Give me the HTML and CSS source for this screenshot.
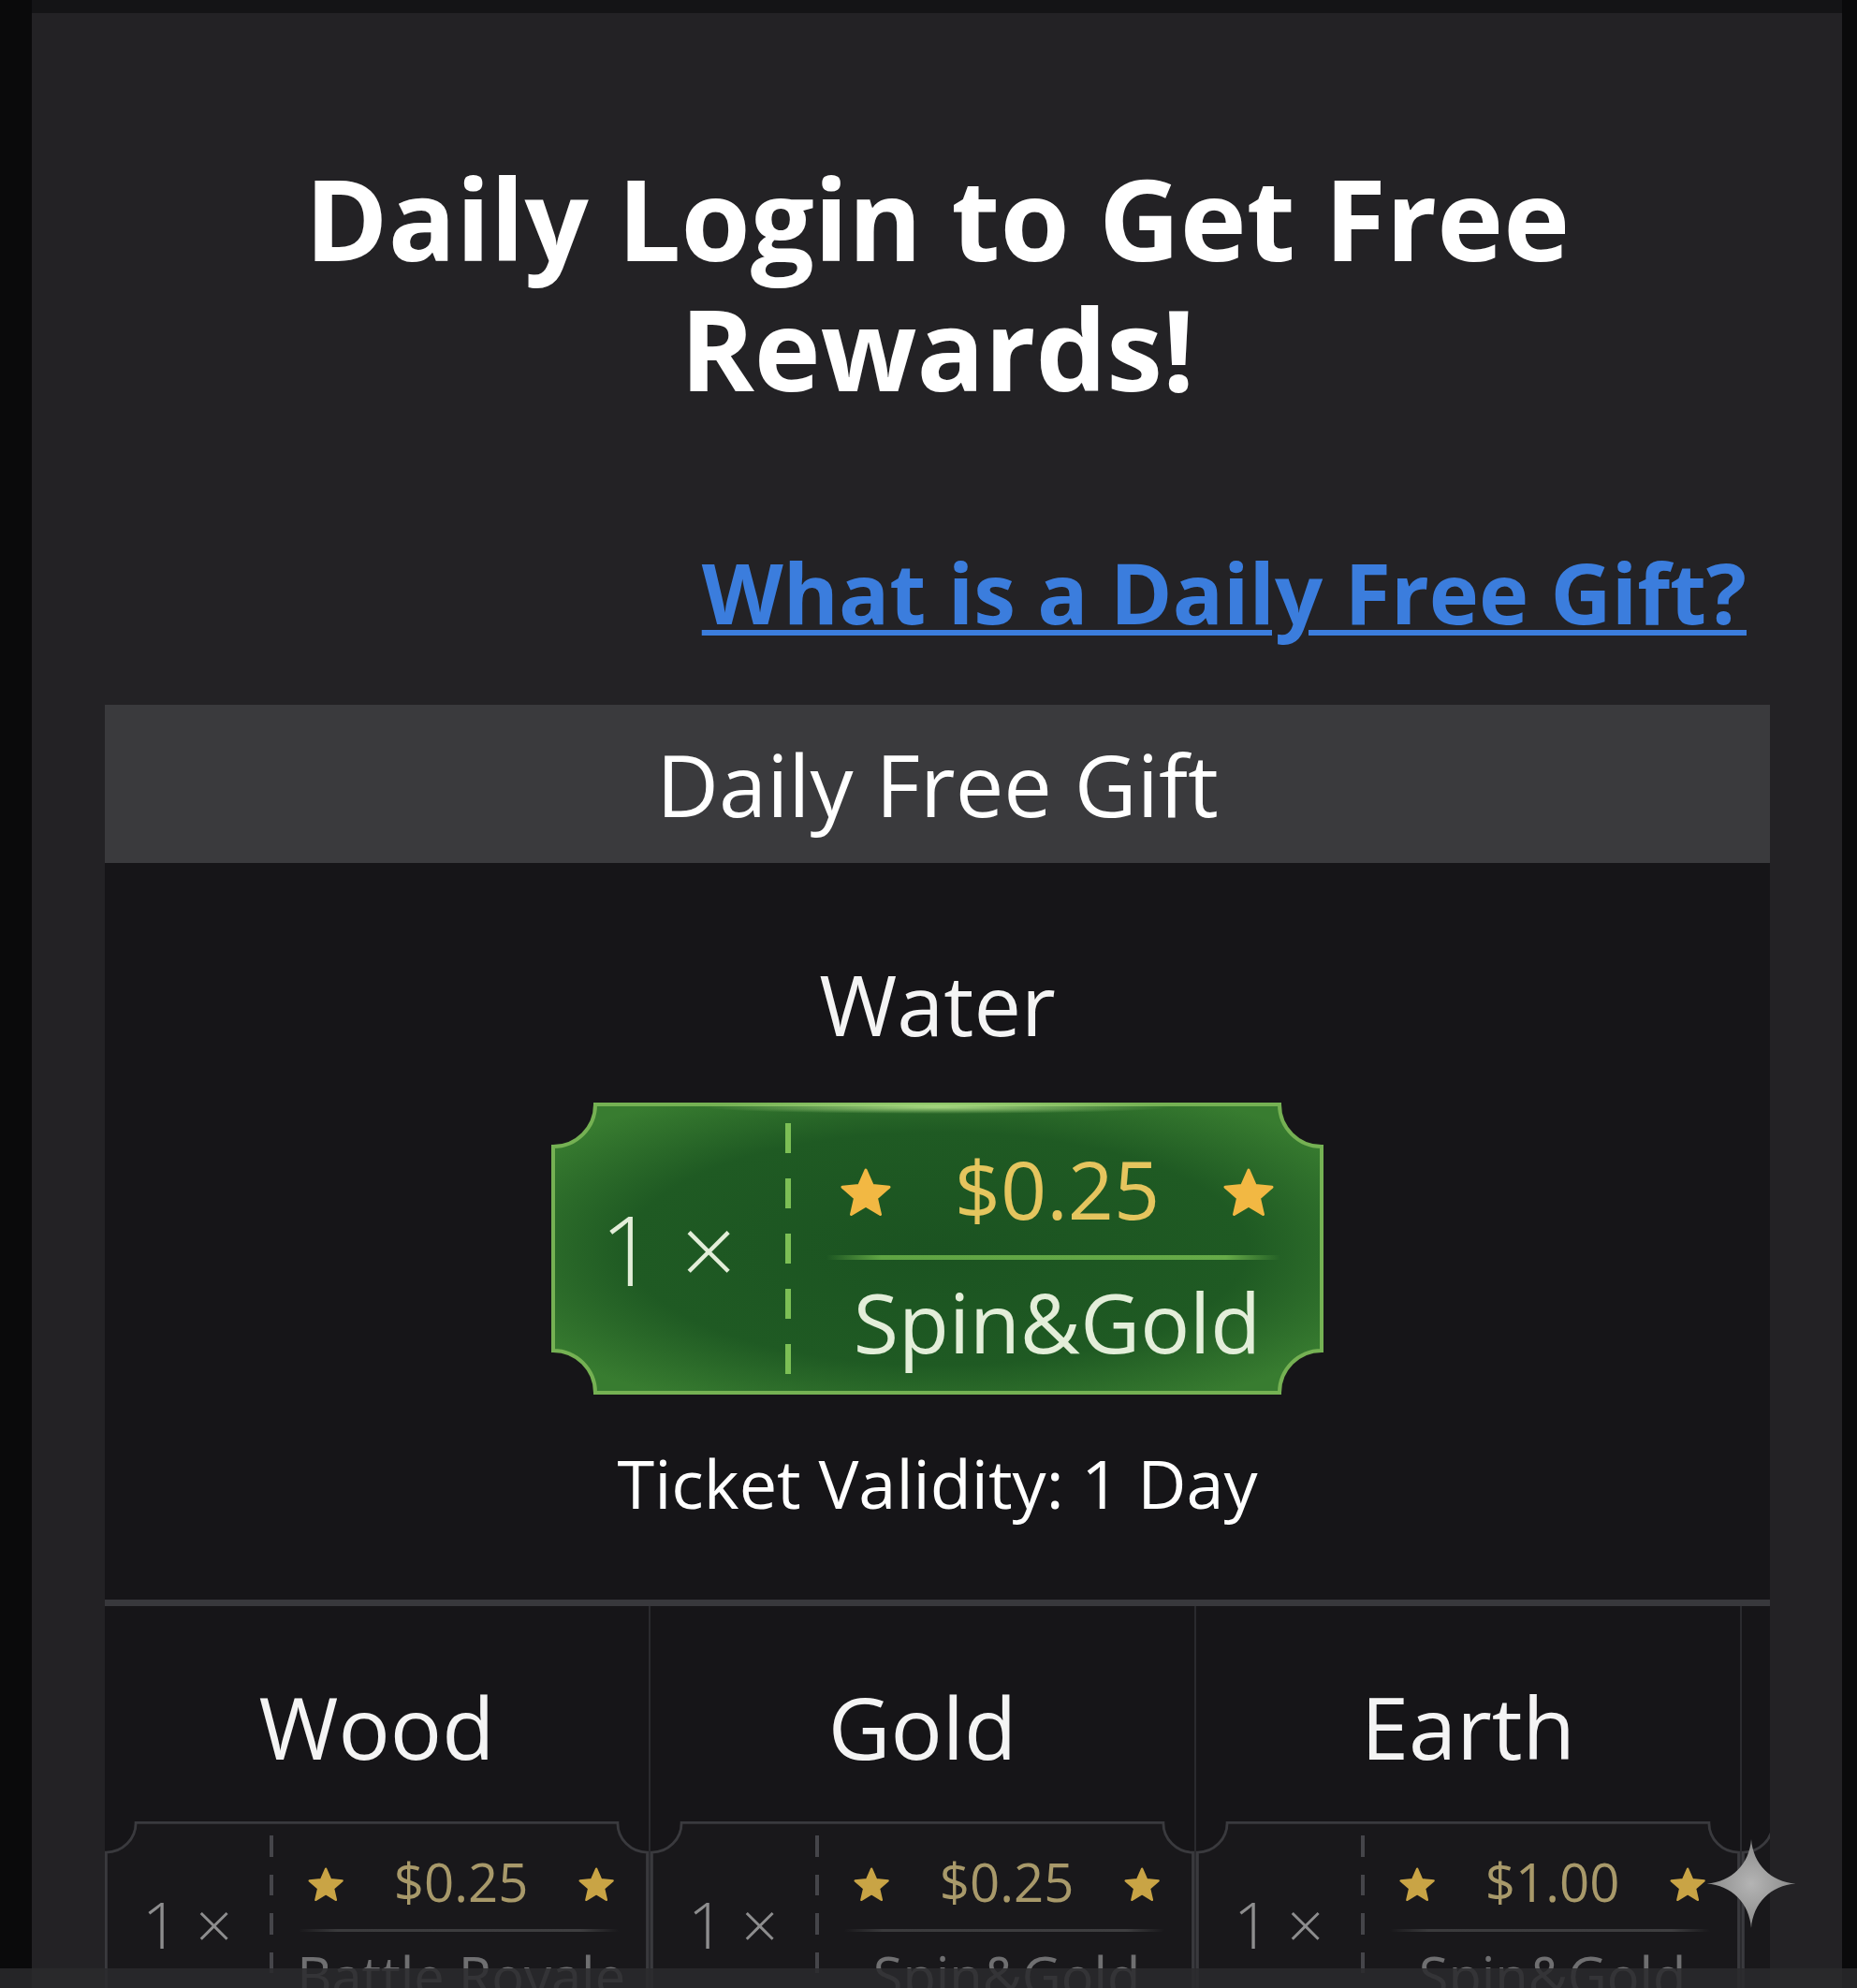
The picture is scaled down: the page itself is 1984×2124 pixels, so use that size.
FILE: index.html
```html
<!DOCTYPE html>
<html lang="en">
<head>
    <meta charset="UTF-8">
    <meta name="viewport" content="width=device-width, initial-scale=1.0">
    <title>Daily Free Gift</title>
    <link rel="stylesheet" href="styles.css">
</head>
<body>
<!-- shared gradients for the ticket shapes -->
<svg class="defs" width="0" height="0">
    <defs>
        <radialGradient id="green-fill" cx="0.5" cy="0.5" r="0.62">
            <stop offset="0" stop-color="#1b5321"/>
            <stop offset="0.65" stop-color="#1f5a23"/>
            <stop offset="1" stop-color="#387c30"/>
        </radialGradient>
        <radialGradient id="top-glow" cx="0.5" cy="0.5" r="0.5">
            <stop offset="0" stop-color="#b6e58c" stop-opacity="0.9"/>
            <stop offset="1" stop-color="#b6e58c" stop-opacity="0"/>
        </radialGradient>
        <radialGradient id="sparkle-fill" cx="0.5" cy="0.5" r="0.5">
            <stop offset="0" stop-color="#b4b4b4"/>
            <stop offset="1" stop-color="#8a8a8a"/>
        </radialGradient>
    </defs>
</svg>

<div class="screen">
    <h1 class="title">Daily Login to Get Free Rewards!</h1>
    <div class="help"><a href="#">What is a Daily Free Gift?</a></div>

    <div class="gift">
        <div class="gift__head">Daily Free Gift</div>

        <div class="gift__today">
            <h2 class="day-name">Water</h2>
            <div class="ticket">
                <svg class="ticket__shape" viewBox="0 0 825 312">
                    <path d="M47,2 H778 A45,45 0 0 0 823,47 V265 A45,45 0 0 0 778,310 H47 A45,45 0 0 0 2,265 V47 A45,45 0 0 0 47,2 Z"/>
                    <ellipse class="glow" cx="412" cy="5" rx="250" ry="7"/>
                </svg>
                <div class="ticket__count">1 ×</div>
                <div class="ticket__cut"></div>
                <div class="ticket__info">
                    <div class="ticket__price">
                        <svg class="star" viewBox="0 0 24 24"><polygon points="12,2 14.9,8.6 22,9.3 16.6,14 18.2,21 12,17.3 5.8,21 7.4,14 2,9.3 9.1,8.6"/></svg>
                        <span>$0.25</span>
                        <svg class="star" viewBox="0 0 24 24"><polygon points="12,2 14.9,8.6 22,9.3 16.6,14 18.2,21 12,17.3 5.8,21 7.4,14 2,9.3 9.1,8.6"/></svg>
                    </div>
                    <div class="ticket__line"></div>
                    <div class="ticket__game">Spin&amp;Gold</div>
                </div>
            </div>
            <p class="validity">Ticket Validity: 1 Day</p>
        </div>

        <div class="days">
            <div class="day">
                <h3 class="day-name">Wood</h3>
                <div class="ticket ticket--small">
                    <svg class="ticket__shape" viewBox="0 0 825 312">
                        <path d="M47,2 H778 A45,45 0 0 0 823,47 V265 A45,45 0 0 0 778,310 H47 A45,45 0 0 0 2,265 V47 A45,45 0 0 0 47,2 Z"/>
                    </svg>
                    <div class="ticket__count">1 ×</div>
                    <div class="ticket__cut"></div>
                    <div class="ticket__info">
                        <div class="ticket__price">
                            <svg class="star" viewBox="0 0 24 24"><polygon points="12,2 14.9,8.6 22,9.3 16.6,14 18.2,21 12,17.3 5.8,21 7.4,14 2,9.3 9.1,8.6"/></svg>
                            <span>$0.25</span>
                            <svg class="star" viewBox="0 0 24 24"><polygon points="12,2 14.9,8.6 22,9.3 16.6,14 18.2,21 12,17.3 5.8,21 7.4,14 2,9.3 9.1,8.6"/></svg>
                        </div>
                        <div class="ticket__line"></div>
                        <div class="ticket__game">Battle Royale</div>
                    </div>
                </div>
            </div>
            <div class="day">
                <h3 class="day-name">Gold</h3>
                <div class="ticket ticket--small">
                    <svg class="ticket__shape" viewBox="0 0 825 312">
                        <path d="M47,2 H778 A45,45 0 0 0 823,47 V265 A45,45 0 0 0 778,310 H47 A45,45 0 0 0 2,265 V47 A45,45 0 0 0 47,2 Z"/>
                    </svg>
                    <div class="ticket__count">1 ×</div>
                    <div class="ticket__cut"></div>
                    <div class="ticket__info">
                        <div class="ticket__price">
                            <svg class="star" viewBox="0 0 24 24"><polygon points="12,2 14.9,8.6 22,9.3 16.6,14 18.2,21 12,17.3 5.8,21 7.4,14 2,9.3 9.1,8.6"/></svg>
                            <span>$0.25</span>
                            <svg class="star" viewBox="0 0 24 24"><polygon points="12,2 14.9,8.6 22,9.3 16.6,14 18.2,21 12,17.3 5.8,21 7.4,14 2,9.3 9.1,8.6"/></svg>
                        </div>
                        <div class="ticket__line"></div>
                        <div class="ticket__game">Spin&amp;Gold</div>
                    </div>
                </div>
            </div>
            <div class="day">
                <h3 class="day-name">Earth</h3>
                <div class="ticket ticket--small">
                    <svg class="ticket__shape" viewBox="0 0 825 312">
                        <path d="M47,2 H778 A45,45 0 0 0 823,47 V265 A45,45 0 0 0 778,310 H47 A45,45 0 0 0 2,265 V47 A45,45 0 0 0 47,2 Z"/>
                    </svg>
                    <div class="ticket__count">1 ×</div>
                    <div class="ticket__cut"></div>
                    <div class="ticket__info">
                        <div class="ticket__price">
                            <svg class="star" viewBox="0 0 24 24"><polygon points="12,2 14.9,8.6 22,9.3 16.6,14 18.2,21 12,17.3 5.8,21 7.4,14 2,9.3 9.1,8.6"/></svg>
                            <span>$1.00</span>
                            <svg class="star" viewBox="0 0 24 24"><polygon points="12,2 14.9,8.6 22,9.3 16.6,14 18.2,21 12,17.3 5.8,21 7.4,14 2,9.3 9.1,8.6"/></svg>
                        </div>
                        <div class="ticket__line"></div>
                        <div class="ticket__game">Spin&amp;Gold</div>
                    </div>
                </div>
            </div>
            <div class="day">
                <h3 class="day-name">Fire</h3>
                <div class="ticket ticket--small">
                    <svg class="ticket__shape" viewBox="0 0 825 312">
                        <path d="M47,2 H778 A45,45 0 0 0 823,47 V265 A45,45 0 0 0 778,310 H47 A45,45 0 0 0 2,265 V47 A45,45 0 0 0 47,2 Z"/>
                    </svg>
                </div>
            </div>
        </div>
    </div>
</div>

<div class="bottom-bar"></div>
<svg class="sparkle" viewBox="0 0 100 100">
    <path d="M50,0 C52,28 72,48 100,50 C72,52 52,72 50,100 C48,72 28,52 0,50 C28,48 48,28 50,0 Z"/>
</svg>
</body>
</html>
```

FILE: styles.css
```css
body {
    margin: 0;
    background-color: #0a0a0b;
    font-family: "Open Sans", "Noto Sans", sans-serif;
    color: #fff;
    overflow: hidden;
}

.defs {
    display: block;
    width: 0;
    height: 0;
}

.screen {
    box-sizing: border-box;
    width: 1934px;
    height: 2124px;
    margin-left: 34px;
    padding: 149px 77px 0 78px;
    border-top: 14px solid #141416;
    background-color: #232225;
    overflow: hidden;
}

.title {
    margin: 0;
    font-size: 120px;
    font-weight: 700;
    line-height: 139px;
    text-align: center;
}

.help {
    margin-top: 135px;
    padding-right: 25px;
    text-align: right;
    font-size: 90px;
    font-weight: 700;
    line-height: 113px;
}

.help a {
    color: #3b7ddd;
    text-decoration-thickness: 6px;
    text-underline-offset: 6px;
}

.gift {
    margin-top: 64px;
}

.gift__head {
    height: 169px;
    display: flex;
    align-items: center;
    justify-content: center;
    background-color: #3a3a3d;
    font-size: 92px;
}

.gift__today {
    display: flex;
    flex-direction: column;
    align-items: center;
    padding: 96px 0 78px;
    background-color: #161518;
}

.day-name {
    margin: 0;
    font-size: 90px;
    font-weight: 400;
    line-height: 108px;
    color: #f4f4f4;
}

.validity {
    margin: 47px 0 0;
    font-size: 72px;
    line-height: 94px;
}

/* ticket */
.ticket {
    position: relative;
    flex: none;
    display: flex;
    width: 825px;
    height: 312px;
    margin-top: 52px;
}

.ticket__shape {
    position: absolute;
    left: 0;
    top: 0;
    width: 100%;
    height: 100%;
}

.ticket__shape path {
    fill: url(#green-fill);
    stroke: #75b153;
    stroke-width: 4;
}

.ticket__shape .glow {
    fill: url(#top-glow);
}

.ticket__count {
    position: relative;
    width: 250px;
    display: flex;
    align-items: center;
    justify-content: center;
    font-size: 104px;
    font-weight: 300;
    line-height: 1;
    color: #e3eed9;
}

.ticket__cut {
    position: relative;
    width: 6px;
    margin: 22px 0;
    background: repeating-linear-gradient(to bottom, #7cbf55 0 32px, transparent 32px 59px);
}

.ticket__info {
    position: relative;
    flex: 1;
    padding-top: 36px;
}

.ticket__price {
    height: 110px;
    display: flex;
    align-items: center;
    justify-content: space-between;
    padding: 0 50px;
    font-size: 86px;
    color: #e5c55e;
}

.star {
    width: 60px;
    height: 60px;
    margin-top: 12px;
}

.star polygon {
    fill: #f2b843;
    stroke: #f2b843;
    stroke-width: 1.2;
    stroke-linejoin: round;
}

.ticket__line {
    height: 5px;
    margin: 17px 46px 0 38px;
    background: linear-gradient(to right, transparent, #5fa443 12%, #66ab48 88%, transparent);
}

.ticket__game {
    margin-top: 11px;
    height: 110px;
    font-size: 88px;
    line-height: 110px;
    text-align: center;
    color: #e3eed9;
}

/* upcoming days */
.days {
    display: flex;
    overflow: hidden;
    border-top: 7px solid #38383c;
    background-color: #161518;
}

.day {
    flex: 0 0 583px;
    box-sizing: border-box;
    display: flex;
    flex-direction: column;
    align-items: center;
    gap: 46px;
    height: 420px;
    padding-top: 74px;
    border-right: 2px solid #2a2a2e;
}

.day .day-name {
    font-size: 92px;
    line-height: 110px;
}

.ticket--small {
    margin-top: 0;
    zoom: 0.7042;
}

.ticket--small .ticket__shape path {
    fill: #19181b;
    stroke: #3a3a3e;
}

.ticket--small .ticket__count {
    font-size: 98px;
    color: #8d8d8e;
}

.ticket--small .ticket__cut {
    background: repeating-linear-gradient(to bottom, #45454a 0 32px, transparent 32px 59px);
}

.ticket--small .ticket__price {
    font-size: 80px;
    color: #a8996a;
}

.ticket--small .star polygon {
    fill: #c9a445;
    stroke: #c9a445;
}

.ticket--small .ticket__line {
    background: linear-gradient(to right, transparent, #3a3a3c 12%, #3e3e40 88%, transparent);
}

.ticket--small .ticket__game {
    font-size: 82px;
    color: #6f6f71;
}

.bottom-bar {
    position: fixed;
    left: 0;
    right: 0;
    bottom: 0;
    height: 21px;
    background-color: rgba(42, 42, 45, 0.85);
}

.sparkle {
    position: fixed;
    left: 1822px;
    top: 1965px;
    width: 98px;
    height: 95px;
}

.sparkle path {
    fill: url(#sparkle-fill);
}
```
